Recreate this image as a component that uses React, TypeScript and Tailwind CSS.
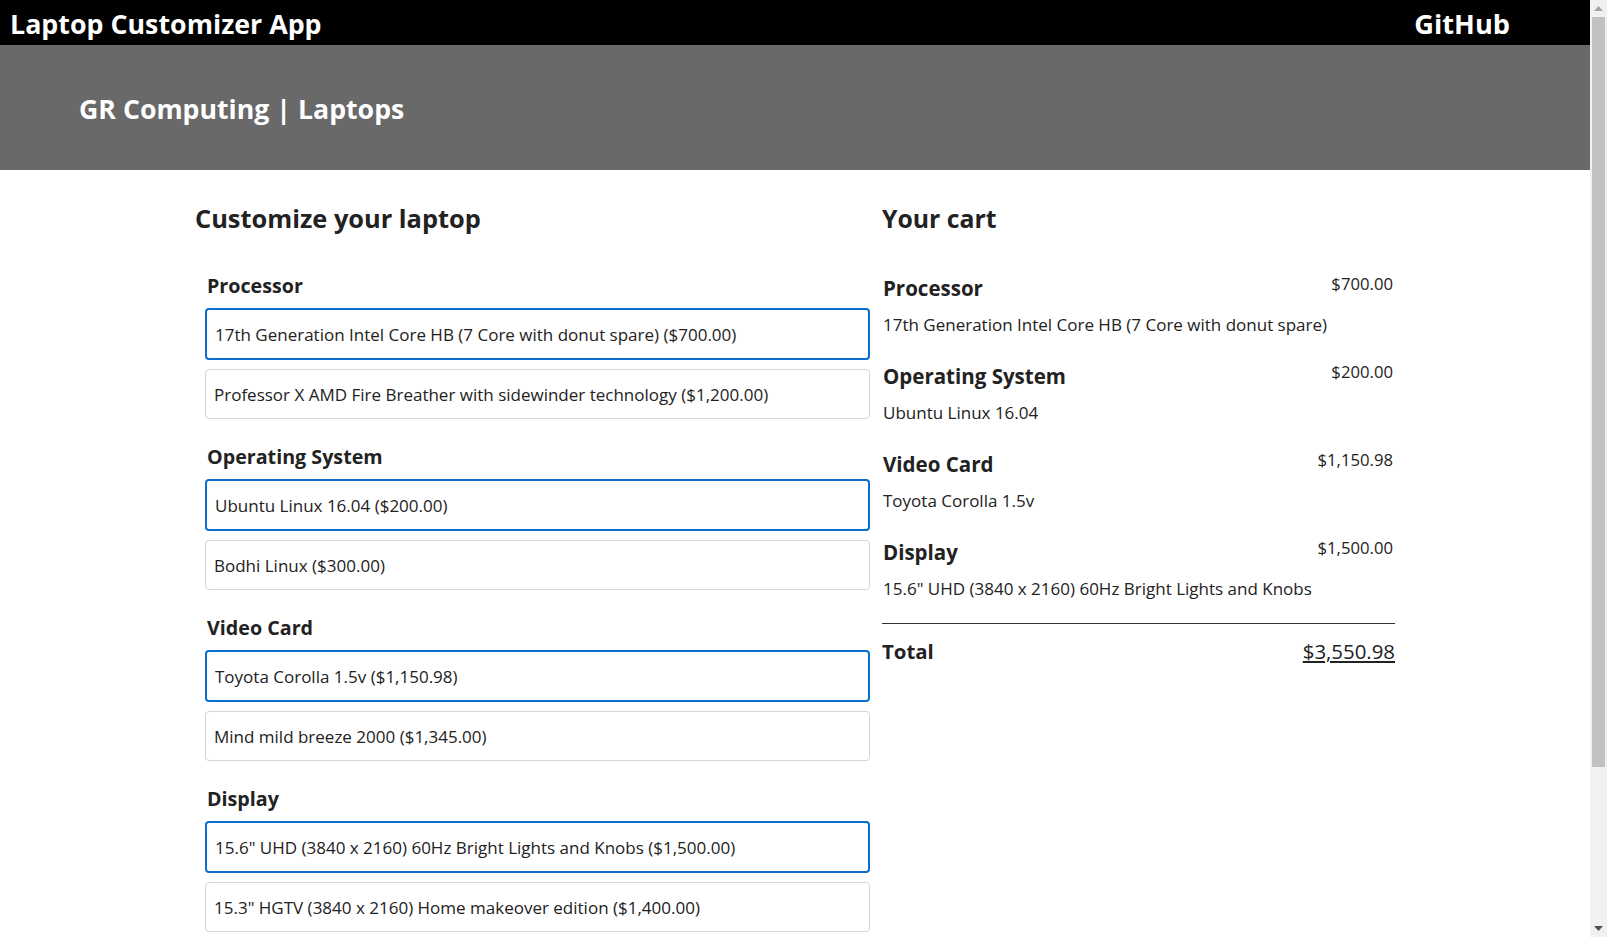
import { useState } from "react";

const FEATURES = [
  {
    name: "Processor",
    options: [
      { name: "17th Generation Intel Core HB (7 Core with donut spare)", cost: 700 },
      { name: "Professor X AMD Fire Breather with sidewinder technology", cost: 1200 },
    ],
  },
  {
    name: "Operating System",
    options: [
      { name: "Ubuntu Linux 16.04", cost: 200 },
      { name: "Bodhi Linux", cost: 300 },
    ],
  },
  {
    name: "Video Card",
    options: [
      { name: "Toyota Corolla 1.5v", cost: 1150.98 },
      { name: "Mind mild breeze 2000", cost: 1345 },
    ],
  },
  {
    name: "Display",
    options: [
      { name: '15.6" UHD (3840 x 2160) 60Hz Bright Lights and Knobs', cost: 1500 },
      { name: '15.3" HGTV (3840 x 2160) Home makeover edition', cost: 1400 },
    ],
  },
];

const USCurrency = new Intl.NumberFormat("en-US", { style: "currency", currency: "USD" });

// stand-in for the browser scrollbar seen in the screenshot
const ScrollStrip = () => (
  <div className="flex w-[17px] shrink-0 flex-col bg-[#f1f1f1]">
    <div className="flex h-[17px] items-center justify-center">
      <svg width="9" height="5" viewBox="0 0 9 5">
        <path d="M0 5 L4.5 0 L9 5 Z" fill="#a3a3a3" />
      </svg>
    </div>
    <div className="mx-[2px] h-[750px] bg-[#c1c1c1]" />
    <div className="flex-1" />
    <div className="flex h-[17px] items-center justify-center">
      <svg width="9" height="5" viewBox="0 0 9 5">
        <path d="M0 0 L9 0 L4.5 5 Z" fill="#505050" />
      </svg>
    </div>
  </div>
);

const App = () => {
  const [selected, setSelected] = useState<Record<string, number>>({
    Processor: 0,
    "Operating System": 0,
    "Video Card": 0,
    Display: 0,
  });

  const total = FEATURES.reduce((acc, f) => acc + f.options[selected[f.name]].cost, 0);

  return (
    <div className="flex h-screen overflow-hidden bg-white">
      <div
        className="min-w-0 flex-1 overflow-hidden text-[#222]"
        style={{ fontFamily: '"Open Sans", "Noto Sans", sans-serif' }}
      >
        <header>
          <div className="flex h-[45px] items-center justify-between bg-black pl-[10px] pr-[80px] pt-[3px] text-white">
            <div className="text-[26.8px] font-bold leading-none">Laptop Customizer App</div>
            <a className="text-[27.2px] font-bold leading-none">GitHub</a>
          </div>
          <div className="flex h-[125px] items-center bg-[#696969] pl-[79px] pt-[4px] text-white">
            <h1 className="text-[26.7px] font-bold">GR Computing | Laptops</h1>
          </div>
        </header>

        <main className="mx-auto flex w-[1200px] gap-[12px] pt-[32px]">
          <form className="w-[675px]">
            <h2 className="text-[25.4px] font-bold leading-[32px]">Customize your laptop</h2>
            <div className="mt-[37px]">
              {FEATURES.map((feature) => (
                <fieldset key={feature.name} className="pl-[10px] pb-[23px]">
                  <legend className="contents">
                    <div className="pl-[2px] pt-[1px] text-[19.7px] font-bold leading-[28px]">{feature.name}</div>
                  </legend>
                  <div className="mt-[8px] flex flex-col gap-[9px]">
                    {feature.options.map((opt, i) => {
                      const isOn = selected[feature.name] === i;
                      return (
                        <label
                          key={opt.name}
                          onClick={() => setSelected({ ...selected, [feature.name]: i })}
                          className={
                            isOn
                              ? "flex h-[52px] cursor-pointer items-center rounded-[4px] border-2 border-[#0a6fcd] px-[8px] pt-[2px] text-[17px]"
                              : "flex h-[50px] cursor-pointer items-center rounded-[4px] border border-[#d6d6d6] px-[8px] pt-[2px] text-[17px]"
                          }
                        >
                          {opt.name} ({USCurrency.format(opt.cost)})
                        </label>
                      );
                    })}
                  </div>
                </fieldset>
              ))}
            </div>
          </form>

          <section className="w-[513px]">
            <h2 className="text-[24.8px] font-bold leading-[32px]">Your cart</h2>
            <div className="mt-[40px]">
              {FEATURES.map((feature) => {
                const opt = feature.options[selected[feature.name]];
                return (
                  <div key={feature.name} className="mb-[25px] pl-[1px] pr-[2px]">
                    <div className="flex h-[28px] items-start justify-between">
                      <div className="text-[20.5px] font-bold leading-[28px]">{feature.name}</div>
                      <div className="text-[16.7px] leading-[20px]">{USCurrency.format(opt.cost)}</div>
                    </div>
                    <div className="mt-[11px] text-[17px] leading-[24px]">{opt.name}</div>
                  </div>
                );
              })}
            </div>
            <div className="mt-[-3px] border-t border-[#333]" />
            <div className="mt-[13px] flex items-center justify-between">
              <div className="text-[20.4px] font-bold leading-[28px]">Total</div>
              <div className="text-[20.4px] leading-[28px] underline">{USCurrency.format(total)}</div>
            </div>
          </section>
        </main>
      </div>
      <ScrollStrip />
    </div>
  );
};

export default App;
